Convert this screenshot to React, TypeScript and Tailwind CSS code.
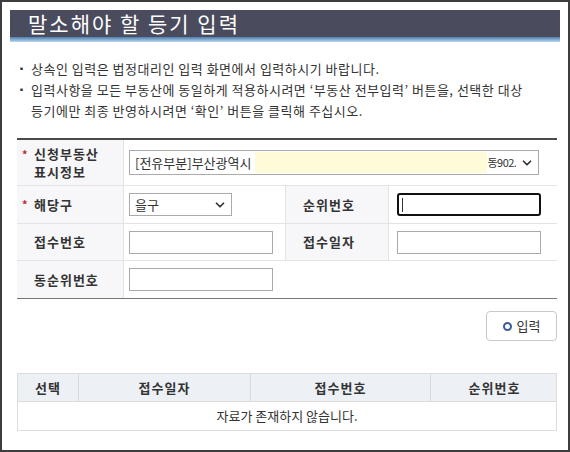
import React from "react";
import { ChevronDown } from "lucide-react";

const FONT = { fontFamily: '"Noto Sans CJK KR", "Noto Sans", sans-serif' };

function Label({ text, required }: { text: React.ReactNode; required?: boolean }) {
  return (
    <div className="flex items-center bg-[#f7f7f9] pl-[5px] text-[13px] font-bold leading-[18px] tracking-[1px] text-[#333]">
      <span className="w-[12px] text-[11px] leading-none text-[#c0292b]">{required ? "*" : ""}</span>
      <span>{text}</span>
    </div>
  );
}

function TextBox({ width, focused }: { width: string; focused?: boolean }) {
  return (
    <div
      className={
        focused
          ? `h-[23px] ${width} rounded-[3px] border-2 border-[#111] bg-white`
          : `h-[23px] ${width} border border-[#aaa] bg-white`
      }
    >
      {focused && <div className="ml-[3px] mt-[3px] h-[14px] w-px bg-[#333]" />}
    </div>
  );
}

export default function App() {
  return (
    <div className="h-[452px] w-[570px] overflow-hidden border-2 border-[#3d3d3d] bg-white" style={FONT}>
      <div className="mx-[8px] mt-[8px]">
        <div className="flex h-[27px] items-center bg-[#4b4b5e] pl-[18px] text-[21px] tracking-[2px] text-white">
          말소해야 할 등기 입력
        </div>
        <div className="h-[5px] bg-gradient-to-b from-[#4f7eae] to-[#b9d8f0]" />
      </div>

      <div className="ml-[15px] mt-[16px] text-[13px] leading-[21px] tracking-[0.5px] text-[#333]">
        <div className="flex">
          <span className="w-[14px] text-[9px]">▪</span>
          <span>상속인 입력은 법정대리인 입력 화면에서 입력하시기 바랍니다.</span>
        </div>
        <div className="flex">
          <span className="w-[14px] text-[9px]">▪</span>
          <span>
            입력사항을 모든 부동산에 동일하게 적용하시려면 ‘부동산 전부입력’ 버튼을, 선택한 대상
            <br />
            등기에만 최종 반영하시려면 ‘확인’ 버튼을 클릭해 주십시오.
          </span>
        </div>
      </div>

      <div className="ml-[15px] mt-[17px] w-[540px] border-t-2 border-b border-t-[#4a4a4a] border-b-[#777]">
        <div className="grid grid-cols-[106px_162px_103px_169px] text-[13px] text-[#333]">
          <div className="grid h-[46px] border-b border-[#e3e3e3]">
            <div className="flex items-start bg-[#f7f7f9] pl-[5px] pt-[5px] text-[13px] font-bold leading-[18px] tracking-[1px] text-[#333]">
              <span className="mt-[4px] w-[12px] text-[11px] leading-none text-[#c0292b]">*</span>
              <span>
                신청부동산
                <br />
                표시정보
              </span>
            </div>
          </div>
          <div className="col-span-3 flex h-[46px] items-center border-b border-l border-[#e3e3e3] pl-[5px]">
            <div className="flex h-[25px] w-[410px] items-center border border-[#aaa] bg-white pl-[5px] pr-[4px]">
              <span className="whitespace-nowrap">[전유부분]부산광역시</span>
              <span className="ml-[4px] h-[21px] w-[232px] bg-[#fdfbd8]" />
              <span className="overflow-hidden whitespace-nowrap text-[11px] tracking-[-0.5px]">동902.</span>
              <ChevronDown className="ml-auto h-[14px] w-[14px] text-[#333]" strokeWidth={3} />
            </div>
          </div>

          <div className="grid h-[38px] border-b border-[#e3e3e3]">
            <Label text="해당구" required />
          </div>
          <div className="flex h-[38px] items-center border-b border-l border-[#e3e3e3] pl-[5px]">
            <div className="flex h-[23px] w-[103px] items-center border border-[#aaa] bg-white pl-[5px] pr-[4px]">
              <span>을구</span>
              <ChevronDown className="ml-auto h-[14px] w-[14px] text-[#333]" strokeWidth={3} />
            </div>
          </div>
          <div className="grid h-[38px] border-b border-l border-[#e3e3e3]">
            <Label text="순위번호" />
          </div>
          <div className="flex h-[38px] items-center border-b border-l border-[#e3e3e3] pl-[8px]">
            <TextBox width="w-[144px]" focused />
          </div>

          <div className="grid h-[37px] border-b border-[#e3e3e3]">
            <Label text="접수번호" />
          </div>
          <div className="flex h-[37px] items-center border-b border-l border-[#e3e3e3] pl-[5px]">
            <TextBox width="w-[144px]" />
          </div>
          <div className="grid h-[37px] border-b border-l border-[#e3e3e3]">
            <Label text="접수일자" />
          </div>
          <div className="flex h-[37px] items-center border-b border-l border-[#e3e3e3] pl-[8px]">
            <TextBox width="w-[144px]" />
          </div>

          <div className="grid h-[37px]">
            <Label text="동순위번호" />
          </div>
          <div className="col-span-3 flex h-[37px] items-center border-l border-[#e3e3e3] pl-[5px]">
            <TextBox width="w-[144px]" />
          </div>
        </div>
      </div>

      <div className="ml-[15px] mt-[12px] flex w-[540px] justify-end">
        <button
          type="button"
          className="flex h-[30px] w-[71px] items-center justify-center gap-[5px] rounded-[4px] border border-[#c8c8c8] bg-white text-[13px] text-[#333]"
        >
          <span className="h-[9px] w-[9px] rounded-full border-[2px] border-[#3a5b9b]" />
          입력
        </button>
      </div>

      <div className="ml-[15px] mt-[32px] w-[540px] border border-[#dcdcdc] text-[13px] text-[#333]">
        <div className="grid h-[28px] grid-cols-[60px_172px_180px_128px] border-b border-[#dcdcdc] bg-[#edf1f6] font-bold tracking-[1px]">
          <div className="flex items-center justify-center">선택</div>
          <div className="flex items-center justify-center border-l border-[#d6dbe2]">접수일자</div>
          <div className="flex items-center justify-center border-l border-[#d6dbe2]">접수번호</div>
          <div className="flex items-center justify-center border-l border-[#d6dbe2]">순위번호</div>
        </div>
        <div className="flex h-[28px] items-center justify-center">자료가 존재하지 않습니다.</div>
      </div>
    </div>
  );
}
